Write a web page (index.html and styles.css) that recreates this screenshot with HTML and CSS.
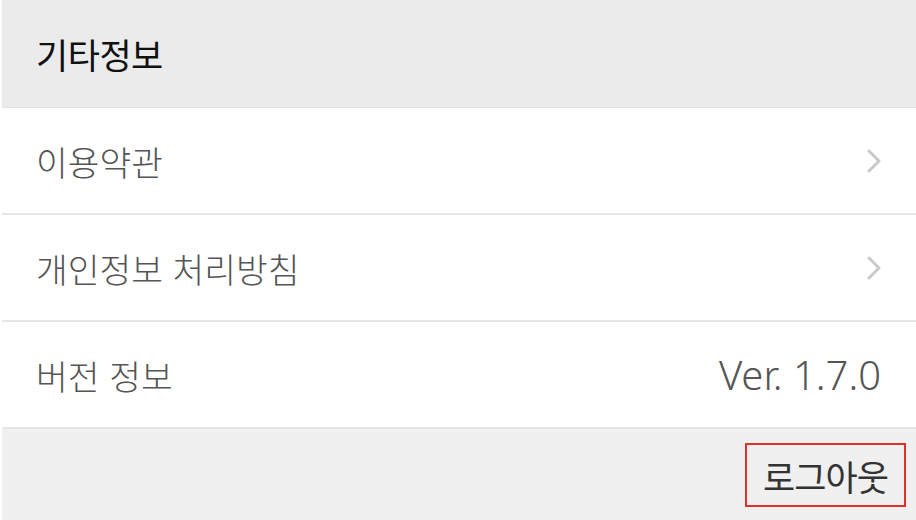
FILE: index.html
```html
<!DOCTYPE html>
<html lang="ko">
<head>
<meta charset="utf-8">
<link rel="stylesheet" href="styles.css">
</head>
<body>
<div class="page">
  <div class="section-head">기타정보</div>
  <div class="row">
    <span class="label">이용약관</span>
    <svg class="chev" width="14" height="24" viewBox="0 0 14 24"><path d="M2 2 L12 12 L2 22" fill="none" stroke="#c9c9c9" stroke-width="3" stroke-linecap="round" stroke-linejoin="round"/></svg>
  </div>
  <div class="row">
    <span class="label">개인정보 처리방침</span>
    <svg class="chev" width="14" height="24" viewBox="0 0 14 24"><path d="M2 2 L12 12 L2 22" fill="none" stroke="#c9c9c9" stroke-width="3" stroke-linecap="round" stroke-linejoin="round"/></svg>
  </div>
  <div class="row">
    <span class="label">버전 정보</span>
    <span class="value">Ver. 1.7.0</span>
  </div>
  <div class="footer">
    <button class="logout">로그아웃</button>
  </div>
</div>
</body>
</html>
```

FILE: styles.css
```css
html, body {
  margin: 0;
  padding: 0;
  background: #ffffff;
  height: 100%;
}
body {
  font-family: "Noto Sans CJK KR", "Noto Sans", sans-serif;
}
.page {
  margin-left: 2px;
  height: 520px;
  display: flex;
  flex-direction: column;
  overflow: hidden;
}
.section-head {
  height: 108px;
  flex-shrink: 0;
  box-sizing: border-box;
  background: #ebebeb;
  border-bottom: 1px solid #e3e3e3;
  display: flex;
  align-items: center;
  padding-left: 34px;
  font-size: 35px;
  color: #111111;
  letter-spacing: -0.5px;
}
.row {
  height: 107px;
  flex-shrink: 0;
  box-sizing: border-box;
  border-bottom: 2px solid #e6e6e6;
  display: flex;
  align-items: center;
  justify-content: space-between;
  padding: 0 35px 0 34px;
  background: #ffffff;
}
.label {
  font-size: 34.5px;
  color: #555555;
  font-weight: 300;
  letter-spacing: 0;
}
.value {
  font-size: 40px;
  color: #555555;
  font-weight: 300;
  font-family: "Noto Sans", sans-serif;
  letter-spacing: 0;
}
.chev {
  display: block;
}
.footer {
  flex: 1;
  background: #f0f0f0;
  display: flex;
  justify-content: flex-end;
  align-items: flex-start;
  padding: 14px 10px 0 0;
}
.logout {
  width: 161px;
  height: 64px;
  box-sizing: border-box;
  border: 2px solid #e0302a;
  background: transparent;
  font-family: "Noto Sans CJK KR", sans-serif;
  font-size: 35px;
  color: #333333;
  padding: 0;
  letter-spacing: -1px;
}
```
